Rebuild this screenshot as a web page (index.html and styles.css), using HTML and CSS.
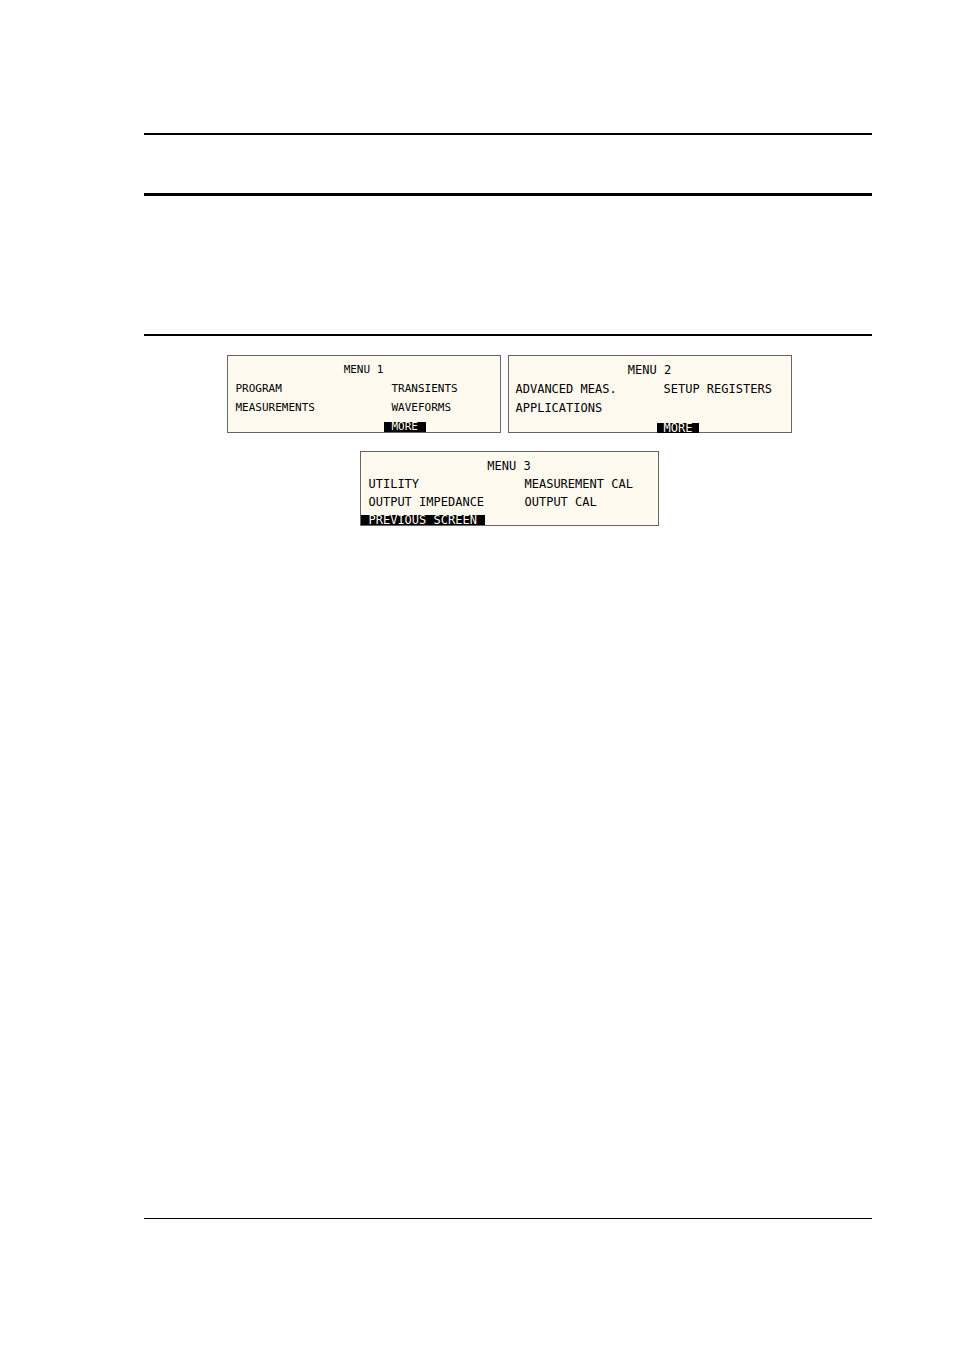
FILE: index.html
```html
<!DOCTYPE html>
<html lang="en">
<head>
<meta charset="utf-8">
<title>Menu screens</title>
<link rel="stylesheet" href="styles.css">
</head>
<body>
<div class="page">
  <header class="page-header"></header>
  <section class="intro"></section>
  <main class="screens">
    <section class="screen screen-one">
      <h2 class="title">MENU 1</h2>
      <button class="item">PROGRAM</button>
      <button class="item">TRANSIENTS</button>
      <button class="item">MEASUREMENTS</button>
      <button class="item">WAVEFORMS</button>
      <button class="item selected right">MORE</button>
    </section>
    <section class="screen screen-two">
      <h2 class="title">MENU 2</h2>
      <button class="item">ADVANCED MEAS.</button>
      <button class="item">SETUP REGISTERS</button>
      <button class="item">APPLICATIONS</button>
      <button class="item selected right">MORE</button>
    </section>
    <section class="screen screen-three">
      <h2 class="title">MENU 3</h2>
      <button class="item">UTILITY</button>
      <button class="item">MEASUREMENT CAL</button>
      <button class="item">OUTPUT IMPEDANCE</button>
      <button class="item">OUTPUT CAL</button>
      <button class="item selected">PREVIOUS SCREEN</button>
    </section>
  </main>
  <footer class="page-footer"></footer>
</div>
</body>
</html>
```

FILE: styles.css
```css
* {
  box-sizing: border-box;
}

body {
  margin: 0;
  background: #fff;
  color: #000;
}

.page {
  display: flex;
  flex-direction: column;
  min-height: 100vh;
  padding: 133px 82px 0 144px;
}

.page-header {
  height: 63px;
  border-top: 2px solid #000;
  border-bottom: 3px solid #000;
}

.intro {
  height: 140px;
  border-bottom: 2px solid #000;
}

.screens {
  flex: 1;
  display: flex;
  flex-wrap: wrap;
  justify-content: center;
  align-content: flex-start;
  gap: 18px 7px;
  padding: 19px 0 0 2px;
}

.screen {
  display: grid;
  grid-auto-rows: 19px;
  padding-top: 5px;
  border: 1px solid #666;
  background: #fffaf0;
  font: 12px/19px "DejaVu Sans Mono", monospace;
}

.screen-one {
  width: 274px;
  height: 78px;
  grid-template-columns: 156px 1fr;
  padding-top: 4px;
  font-size: 11px;
}

.screen-two {
  width: 284px;
  height: 78px;
  grid-template-columns: 148px 1fr;
}

.screen-three {
  width: 299px;
  height: 75px;
  grid-template-columns: 156px 1fr;
  grid-auto-rows: 18px;
  line-height: 18px;
}

.title {
  grid-column: 1 / -1;
  margin: 0;
  font: inherit;
  text-align: center;
}

.item {
  justify-self: start;
  margin: 0;
  border: 0;
  padding: 0 8px;
  background: none;
  color: inherit;
  font: inherit;
  white-space: nowrap;
}

.screen-two .item {
  padding: 0 7px;
}

.selected {
  grid-row: 4;
  align-self: center;
  height: 10px;
  background: #000;
  color: #fffaf0;
  line-height: 10px;
}

.right {
  grid-column: 2;
}

.page-footer {
  height: 133px;
  border-top: 1px solid #000;
}
```
